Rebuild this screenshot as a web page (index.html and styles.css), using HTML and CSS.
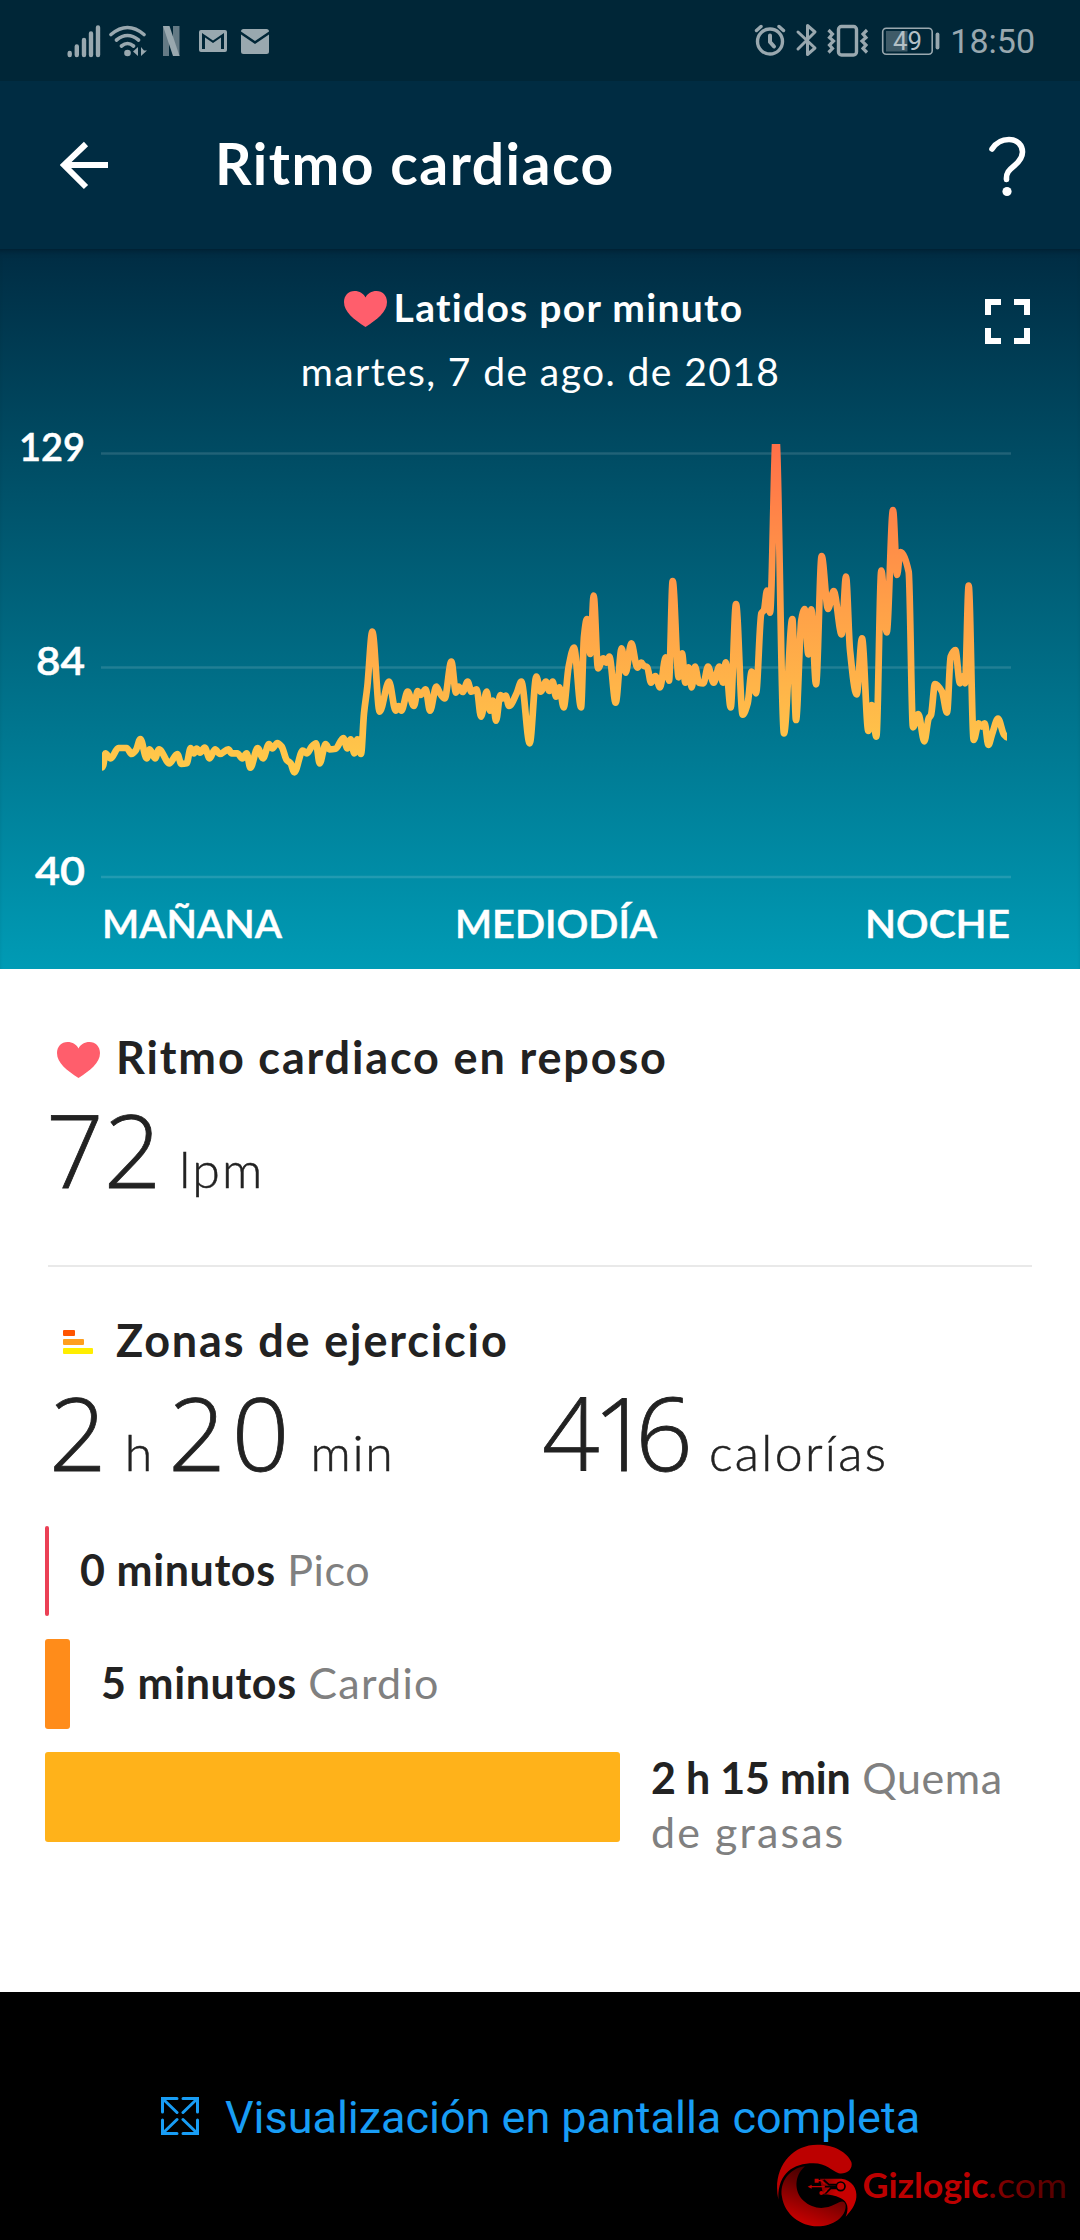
FILE: index.html
```html
<!DOCTYPE html>
<html lang="es">
<head>
<meta charset="utf-8">
<title>Ritmo cardiaco</title>
<link rel="stylesheet" href="styles.css">
</head>
<body>
<header class="status">
  <svg class="status-left" width="210" height="34" viewBox="66 24 210 34" fill="#99a8af">
    <g stroke="#99a8af" stroke-width="4.4" stroke-linecap="round">
      <path d="M69.7 53v2M76.8 46.5v8.5M84 40v15M91 33.500v21.500M98 27.500v27.500"/>
    </g>
    <g fill="none" stroke="#99a8af" stroke-width="3.6" stroke-linecap="round">
      <path d="M111 34.500q16.500-14 33 0M116.500 40q11-9 22 0M121.500 46q6-5 12 0"/>
    </g>
    <circle cx="127.500" cy="53" r="3.300"/>
    <path d="M138 47v9l-5-4.500zM141 47v9l6-5.500h-3z"/>
    <path opacity=".65" d="M163 26h6v30h-6zM173 26h6.500v30H173z"/>
    <path d="M163 26h6.500l10 30H173z"/>
    <path fill-rule="evenodd" d="M201 30h24q2 0 2 2v18q0 2-2 2h-24q-2 0-2-2V32q0-2 2-2zm1 3v16h3V37.500l8 5.500 8-5.500V49h3V33l-11 7.500z"/>
    <path d="M243.500 29h23q2.500 0 2.500 2.500l-14 9.500-14-9.500q0-2.500 2.500-2.500zM241 34.500l14 9.500 14-9.500v17q0 2.500-2.500 2.500h-23q-2.500 0-2.500-2.500z"/>
  </svg>
  <div class="status-right">
    <svg width="192" height="36" viewBox="754 23 192 36" fill="none" stroke="#99a8af" stroke-width="3.400">
      <circle cx="771" cy="41.500" r="12.500"/>
      <path stroke-linecap="round" d="M757.500 30.500l4.500-4M784.500 30.500l-4.500-4"/>
      <path stroke-width="4" stroke-linecap="round" stroke-linejoin="round" d="M771 35.500v6.500l4 4.500"/>
      <path stroke-width="3" stroke-linejoin="round" stroke-linecap="round" d="M799 32l17 16-7.500 6.500v-29L816 32l-17 17"/>
      <rect x="839.500" y="26.500" width="18" height="28.500" rx="3"/>
      <path stroke-width="3.200" d="M829.500 30l4 4-3 3.500 4 3.500-4 4 3 3.500-4 4M868 30l-4 4 3 3.500-4 3.500 4 4-3 3.500 4 4"/>
      <rect x="883.700" y="28.200" width="49.500" height="26" rx="3.500" stroke-width="1.600"/>
      <path d="M887 31h21.500v20.500H887z" fill="#3f5b68" stroke="none"/>
      <path stroke-width="3.800" stroke-linecap="round" d="M938.500 34.500v13"/>
      <text class="battery-value" x="894" y="49.500" textLength="29" lengthAdjust="spacingAndGlyphs" stroke="none">49</text>
    </svg>
    <time class="clock">18:50</time>
  </div>
</header>

<nav class="appbar">
  <svg class="back" width="50" height="50" viewBox="60 140 50 50" fill="none" stroke="#fff" stroke-width="6"><path d="M86 144L64 165L86 187M64 165h44"/></svg>
  <h1 class="title">Ritmo cardiaco</h1>
  <svg class="help" width="40" height="66" viewBox="988 134 40 66"><path d="M992 149q6-9.500 17-9.500c8.500 0 13.500 6 13.500 12.500 0 6-3.500 10-8.500 14s-8 7-7.500 13.500" fill="none" stroke="#fff" stroke-width="5.600" stroke-linecap="round"/><circle cx="1007" cy="191.500" r="4.600" fill="#fff"/></svg>
</nav>

<section class="chart">
  <div class="chart-head">
    <div class="chart-titles">
      <div class="chart-title"><svg class="heart" width="43" height="36" viewBox="0 0 43 36"><path d="M21.500 36C10 28.500 0 21 0 11 0 4.500 4.500 0 10.500 0c5 0 9 2.500 11 6.500C23.500 2.500 27.500 0 32.500 0 38.500 0 43 4.500 43 11c0 10-10 17.500-21.500 25z" fill="#ff5e6c"/></svg><span class="metric">Latidos por minuto</span></div>
      <div class="date">martes, 7 de ago. de 2018</div>
    </div>
    <svg class="expand" width="45" height="45" viewBox="0 0 45 45" fill="none" stroke="#fff" stroke-width="6"><path d="M3 16V3h13M29 3h13v13M42 29v13H29M16 42H3V29"/></svg>
  </div>
  <svg class="plot" width="1080" height="549" viewBox="0 420 1080 549">
    <defs>
      <linearGradient id="heat" gradientUnits="userSpaceOnUse" x1="0" y1="444" x2="0" y2="770">
        <stop offset="0" stop-color="#ff7048"/><stop offset=".5" stop-color="#ffa048"/><stop offset="1" stop-color="#ffca4a"/>
      </linearGradient>
      <clipPath id="area"><path d="M102 444h905v440H102z"/></clipPath>
    </defs>
    <path class="grid" d="M101 453.500h910M101 667.500h910M101 877h910"/>
    <path id="line" class="line" clip-path="url(#area)" stroke="url(#heat)"/>
    <g class="axis">
      <text x="19" y="461" textLength="66" lengthAdjust="spacingAndGlyphs">129</text>
      <text x="36" y="675" textLength="49" lengthAdjust="spacingAndGlyphs">84</text>
      <text x="35" y="885" textLength="50" lengthAdjust="spacingAndGlyphs">40</text>
      <text x="102" y="938" textLength="180" lengthAdjust="spacingAndGlyphs">MAÑANA</text>
      <text x="455" y="938" textLength="202" lengthAdjust="spacingAndGlyphs">MEDIODÍA</text>
      <text x="865" y="938" textLength="145" lengthAdjust="spacingAndGlyphs">NOCHE</text>
    </g>
  </svg>
</section>

<main class="content">
  <section class="resting">
    <h2 class="head"><span class="head-icon"><svg width="43" height="36" viewBox="0 0 43 36"><path d="M21.500 36C10 28.500 0 21 0 11 0 4.500 4.500 0 10.500 0c5 0 9 2.500 11 6.500C23.500 2.500 27.500 0 32.500 0 38.500 0 43 4.500 43 11c0 10-10 17.500-21.500 25z" fill="#ff5e6c"/></svg></span>Ritmo cardiaco en reposo</h2>
    <p class="figures"><span class="num">72</span><span class="unit lpm">lpm</span></p>
  </section>
  <section class="zones">
    <h2 class="head"><span class="head-icon"><svg width="30" height="24" viewBox="0 0 30 24"><rect width="12" height="6" rx="1" fill="#ff5400"/><rect y="9" width="21" height="6" rx="1" fill="#ff9f1f"/><rect y="18" width="30" height="6" rx="1" fill="#ffee00"/></svg></span>Zonas de ejercicio</h2>
    <div class="totals">
      <p class="figures time"><span class="num">2</span><span class="unit hours">h</span><span class="num minutes">20</span><span class="unit min">min</span></p>
      <p class="figures"><span class="num"><span class="k4">4</span><span class="k1">1</span>6</span><span class="unit calories">calorías</span></p>
    </div>
    <div class="bars">
      <div class="row"><i class="bar peak" style="width:4px"></i><p class="label"><b>0 minutos</b> Pico</p></div>
      <div class="row"><i class="bar cardio" style="width:25px"></i><p class="label"><b>5 minutos</b> <span class="cardio-name">Cardio</span></p></div>
      <div class="row"><i class="bar fat" style="width:575px"></i><p class="label long"><b>2 h 15 min</b> Quema<br><span class="fat-name">de grasas</span></p></div>
    </div>
  </section>
</main>

<footer class="footer">
  <div class="full">
    <svg width="38" height="38" viewBox="0 0 38 38" fill="none" stroke="#189df5" stroke-width="3"><path stroke-linecap="round" d="M1.500 15V1.500H16M22 1.500h14.500V15M36.500 23v13.500H22M16 36.500H1.500V23M2 2l14 13.500M36 2L22 15.500M36 36L22 22.500M2 36l14-13.500"/></svg>
    <span class="full-label">Visualización en pantalla completa</span>
  </div>
  <div class="brand">
    <svg class="logo" width="82" height="84" viewBox="108 254 246 250">
      <defs><linearGradient id="g1" x1=".7" y1="0" x2=".3" y2="1"><stop offset="0" stop-color="#300"/><stop offset=".4" stop-color="#6a0000"/><stop offset="1" stop-color="#d00000"/></linearGradient>
      <linearGradient id="g2" x1="0" y1="0" x2="1" y2=".4"><stop offset="0" stop-color="#700"/><stop offset=".5" stop-color="#c80000"/></linearGradient></defs>
      <path fill="#bc0000" d="M115 420C96 330 150 255 232 255c50 0 90 22 102 52 6 22-14 38-38 34-22-8-36-30-76-30-62 0-108 32-105 109z"/>
      <path fill="url(#g1)" d="M195 320c-34 30-32 76-6 102 30 28 66 28 96 12 18-10 28-14 32 2 2 36-38 64-85 64-50 0-98-36-106-88-8-42 20-86 69-92z"/>
      <path fill="url(#g2)" d="M240 357h64c32 4 48 30 45 56-2 22-16 42-32 58 10-22 8-46-16-56-16-8-32-10-52-11z"/>
      <g fill="none" stroke="#000" stroke-width="5"><circle cx="302" cy="380" r="13"/><path d="M290 381h-36M289 375h-22l-16-14M290 386l-18 0-14 14h-8"/></g>
      <g stroke="#c00000" stroke-width="4" fill="none"><path d="M210 381h44M230 363h14l10 10M244 400h8l8-8"/></g>
      <g fill="#c00000"><path d="M203 381l12-6v12zM224 357h12v12h-12z"/><circle cx="244" cy="400" r="6"/></g>
    </svg>
    <svg class="wordmark" width="206" height="50" viewBox="862 2160 206 50"><defs><linearGradient id="com" x1="0" x2="1"><stop offset="0" stop-color="#870000"/><stop offset="1" stop-color="#500000"/></linearGradient></defs><text class="brand-name" x="862.500" y="2198.500" textLength="126" lengthAdjust="spacingAndGlyphs">Gizlogic</text><text class="brand-tld" x="988" y="2198.500" textLength="79" lengthAdjust="spacingAndGlyphs" fill="url(#com)">.com</text></svg>
  </div>
</footer>
<script src="chart.js"></script>
</body>
</html>
```
FILE: styles.css
```css
* { box-sizing: border-box; }
body { margin: 0; width: 1080px; height: 2240px; background: #fff; color: #222; font-family: Lato, "Liberation Sans", sans-serif; overflow: hidden; }
h1, h2, p { margin: 0; font-weight: 700; }
svg { display: block; flex: none; }

.status { height: 81px; background: #002637; display: flex; justify-content: space-between; padding: 0 45px 0 66px; }
.status-left { margin-top: 24px; }
.status-right { display: flex; color: #99a8af; padding-top: 23px; }
.clock { font: 34px/36px Roboto, sans-serif; margin-left: 5px; }
.battery-value { font: 25px Roboto, sans-serif; fill: #b3c0c6; }

.appbar { height: 168px; background: #002c42; display: flex; align-items: flex-start; padding: 0 52px 0 60px; color: #fff; }
.back { margin-top: 59px; }
.title { font-size: 57px; line-height: 60px; letter-spacing: 1.5px; margin: 52px auto 0 105px; }
.help { margin-top: 53px; }

.chart { height: 720px; background: linear-gradient(#002c43, #009bb5); color: #fff; box-shadow: inset 0 6px 6px -5px #001c2c; }
.chart-head { height: 171px; display: grid; grid-template-columns: 44px 1fr 45px; padding: 0 50px; }
.chart-titles { grid-column: 2; display: flex; flex-direction: column; align-items: center; padding-top: 34px; gap: 16px; font-size: 39px; line-height: 48px; white-space: nowrap; }
.chart-title { display: flex; align-items: center; gap: 7px; padding-left: 8px; font-weight: 700; letter-spacing: 1.3px; }
.heart { margin-top: 4px; }
.date { letter-spacing: 1.4px; padding-left: 2px; }
.expand { margin-top: 50px; }
.grid { stroke: #fff; stroke-opacity: .13; stroke-width: 2.5px; }
.line { fill: none; stroke-width: 6.7px; stroke-linejoin: round; }
.axis { fill: #fff; font-size: 39px; font-weight: 600; stroke: #fff; stroke-width: .5px; }

.content { height: 1023px; padding: 64px 45px 0; }
.head { display: flex; align-items: center; height: 48px; font-size: 45px; line-height: 48px; letter-spacing: 1.85px; }
.head-icon { width: 71px; display: flex; padding: 5px 0 0 12px; }
.zones .head-icon { padding: 3px 0 0 18px; }
.figures { display: flex; align-items: baseline; height: 100px; margin-top: 18px; line-height: 100px; font-weight: 300; }
.num { font-family: "Open Sans", sans-serif; font-size: 101px; -webkit-text-stroke: .8px #222; }
.unit { font-size: 50px; line-height: 60px; -webkit-text-stroke: .5px #222; }
.lpm { margin-left: 18px; letter-spacing: 2px; }
.time { padding-left: 4px; }
.hours { margin-left: 18px; }
.minutes { margin-left: 16px; letter-spacing: 6px; }
.min { margin-left: 15px; letter-spacing: 1.7px; }
.k4 { letter-spacing: -7px; }
.k1 { letter-spacing: -15px; }
.calories { margin-left: 16px; letter-spacing: 2.3px; }

.resting { height: 234px; margin: 0 3px; border-bottom: 2px solid #e9e9e9; }
.resting .head { margin-left: -3px; }
.resting .figures { margin-left: -2px; }
.zones { padding-top: 49px; }
.totals { display: grid; grid-template-columns: 497px 1fr; }
.bars { display: flex; flex-direction: column; gap: 23px; margin-top: 44px; }
.row { display: flex; height: 90px; gap: 31px; }
.bar { border-radius: 3px; flex: none; }
.peak { background: #eb4055; }
.cardio { background: #ff8c1a; }
.fat { background: #ffb21a; }
.label { margin-top: 17px; font-size: 43px; line-height: 54px; font-weight: 400; letter-spacing: .6px; color: #808080; white-space: nowrap; }
.label b { font-weight: 700; color: #222; }
.cardio-name { letter-spacing: 1.3px; }
.fat-name { letter-spacing: 2.1px; }
.long { margin-top: -1px; letter-spacing: .6px; }
.long b { letter-spacing: -.2px; }

.footer { height: 248px; background: #000; padding-top: 97px; }
.full { display: flex; align-items: center; height: 54px; margin-left: 161px; gap: 26px; color: #189df5; font: 45px/54px Roboto, sans-serif; white-space: nowrap; }
.full-label { padding-top: 3px; letter-spacing: -.03px; }
.brand { display: flex; margin-left: 776px; align-items: flex-start; gap: 4px; }
.logo { margin-top: 1px; }
.wordmark { margin-top: 16px; }
.brand-name { font: 700 34px Lato, sans-serif; fill: #bc0000; }
.brand-tld { font: 400 34px Lato, sans-serif; }
```
FILE: chart.js
```js
// Heart-rate samples per day segment: origin of the segment followed by x,y pairs in thirds of a pixel.
const segments = [
  [80, 580, '66,562 70,555 76,520 92,535 115,504 140,504 155,522 168,510 181,477 200,535 209,508 225,535 237,508 268,550 292,522 304,552 320,550 332,504 342,520 350,506 360,518 374,503 389,535 405,508 420,522 445,508 455,520 472,520 487,535 500,520 511,563 533,504 549,535 567,492 577,505 592,489 605,500 620,540 632,550 643,577 668,512 681,520 695,500 708,490 719,550 737,492 748,508 767,506 790,474 802,505 812,478 823,520 832,478 843,522 852,400 862,320'],
  [340, 580, '97,155 119,395 147,305 167,392 176,378 184,392 203,335 222,378 233,333 242,345 257,328 270,392 289,320 300,340 314,355 334,245 348,338 356,320 368,336 383,305 394,335 410,328 423,410 440,335 450,392 459,362 468,422 481,345 489,355 497,347 507,378 530,340 544,305 569,490 589,290 602,335 618,305 628,333 638,305 648,350 658,322 671,382 686,260 702,203 723,382 732,170 741,117 751,222 761,47 774,265 790,235 799,248'],
  [560, 540, '148,350 167,488 185,325 197,398 214,310 232,383 244,368 252,378 262,382 273,428 286,408 300,442 317,352 327,422 338,123 356,412 366,340 376,428 386,382 395,442 405,380 417,428 430,430 444,380 461,428 478,380 489,428 497,367 512,502 528,192 548,524 563,490 575,395 588,460 604,220 612,210 621,152 630,218'],
  [720, 420, '168,40 192,940 217,597 228,900 244,600 254,567 265,703 274,568 288,793 305,408 324,567 341,513 365,643 378,470 390,690 410,823 426,655 445,933 455,855 469,950 484,452 500,637 519,270 531,465 541,396 566,455 579,922 595,882 613,964 626,895 633,885 645,792 666,815 681,878 692,710 706,690 720,790 727,770 735,790 746,497 761,960 776,910 785,920 794,910 805,975 817,940 834,896 852,944 862,952']
];
const pts = segments.flatMap(([ox, oy, s]) => s.split(' ').map(p => {
  const [x, y] = p.split(',').map(Number);
  return [ox + x / 3, oy + y / 3];
}));
// Monotone cubic interpolation: flat tangents at every local peak and trough.
const slope = i => (pts[i + 1][1] - pts[i][1]) / (pts[i + 1][0] - pts[i][0]);
const tangent = i => {
  if (i === 0 || i === pts.length - 1) return 0;
  const a = slope(i - 1), b = slope(i);
  return a * b <= 0 ? 0 : 2 * a * b / (a + b);
};
let d = `M${pts[0]}`;
for (let i = 0; i < pts.length - 1; i++) {
  const [x0, y0] = pts[i], [x1, y1] = pts[i + 1], h = (x1 - x0) / 3;
  d += `C${x0 + h},${y0 + h * tangent(i)} ${x1 - h},${y1 - h * tangent(i + 1)} ${x1},${y1}`;
}
document.getElementById('line').setAttribute('d', d);
```
